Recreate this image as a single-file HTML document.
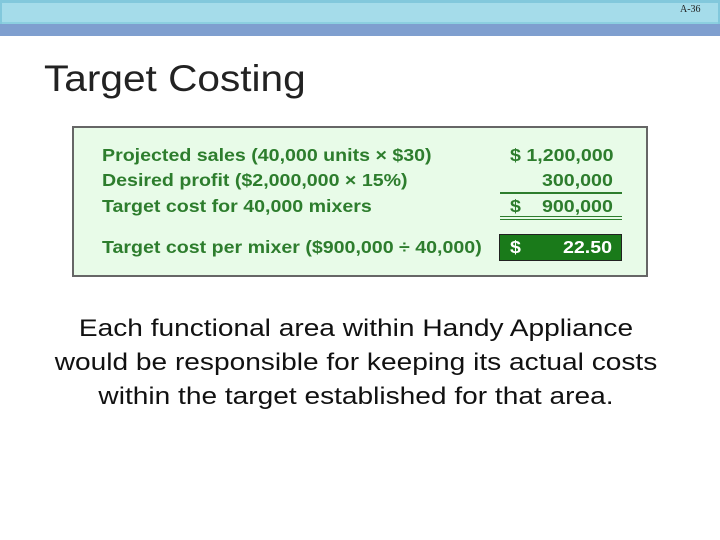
<!DOCTYPE html>
<html><head><style>
body{margin:0;width:720px;height:540px;background:#fff;position:relative;overflow:hidden;font-family:"Liberation Sans",sans-serif}
.a{position:absolute}
.g{color:#2d7d2d;font-weight:bold;font-size:17.5px;white-space:nowrap;transform:scaleX(1.12);transform-origin:left top}
</style></head><body>
<div class="a" style="left:0;top:0;width:720px;height:24px;background:#a5dcea;border-top:3px solid #82c8dc;border-bottom:2px solid #8ccfe0;box-sizing:border-box"></div>
<div class="a" style="left:0;top:0;width:2px;height:24px;background:#82c8dc"></div>
<div class="a" style="left:718px;top:0;width:2px;height:24px;background:#82c8dc"></div>
<div class="a" style="left:0;top:24px;width:720px;height:12px;background:#7f9fcf"></div>
<div class="a" style="left:680px;top:4px;font-family:'Liberation Serif',serif;font-size:10px;color:#222">A-36</div>
<div class="a" style="left:44px;top:58px;font-size:37px;color:#222;transform:scaleX(1.097);transform-origin:left top;white-space:nowrap">Target Costing</div>
<div class="a" style="left:72px;top:126px;width:576px;height:151px;background:#e8fbe8;border:2px solid #666;box-sizing:border-box"></div>
<div class="a g" style="left:102px;top:145px">Projected sales (40,000 units × $30)</div>
<div class="a g" style="left:102px;top:170px">Desired profit ($2,000,000 × 15%)</div>
<div class="a g" style="left:102px;top:196px">Target cost for 40,000 mixers</div>
<div class="a g" style="left:102px;top:237px">Target cost per mixer ($900,000 ÷ 40,000)</div>
<div class="a g" style="left:510px;top:145px">$ 1,200,000</div>
<div class="a g" style="left:542px;top:170px">300,000</div>
<div class="a g" style="left:510px;top:196px">$</div>
<div class="a g" style="left:542px;top:196px">900,000</div>
<div class="a" style="left:500px;top:192px;width:122px;height:2px;background:#2d7d2d"></div>
<div class="a" style="left:500px;top:216px;width:122px;height:1px;background:#2d7d2d"></div>
<div class="a" style="left:500px;top:219px;width:122px;height:1px;background:#2d7d2d"></div>
<div class="a" style="left:499px;top:234px;width:123px;height:27px;background:#1a7a1a;border:1px solid #222;box-sizing:border-box"></div>
<div class="a g" style="left:510px;top:237px;color:#fff">$</div>
<div class="a g" style="left:563px;top:237px;color:#fff">22.50</div>
<div class="a" style="left:0;top:312px;width:712px;text-align:center;font-size:24px;line-height:34px;color:#111;transform:scaleX(1.17);transform-origin:356px 0">Each functional area within Handy Appliance<br>would be responsible for keeping its actual costs<br>within the target established for that area.</div>
</body></html>
